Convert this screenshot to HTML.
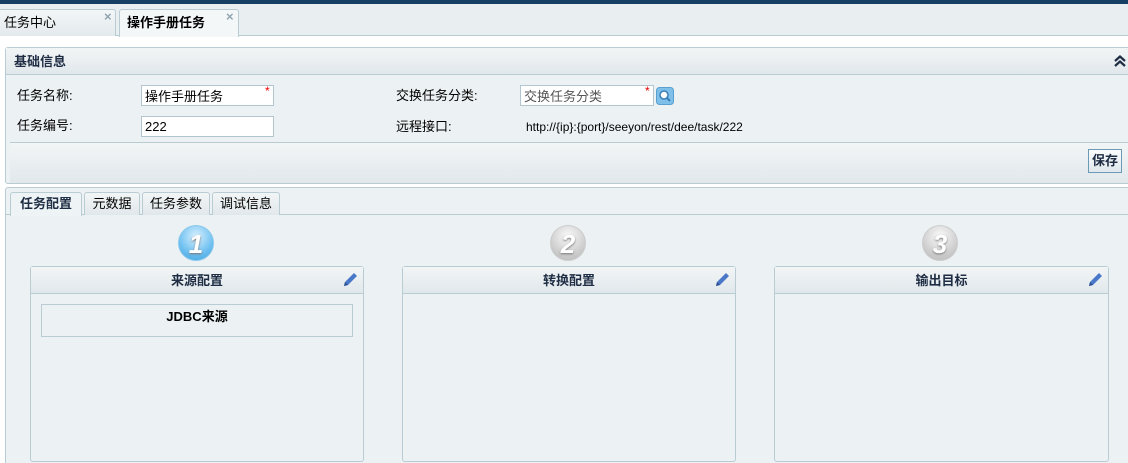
<!DOCTYPE html>
<html style="height:463px;overflow:hidden"><head><meta charset="utf-8"><style>
*{box-sizing:border-box;margin:0;padding:0}
body{width:1128px;height:463px;overflow:hidden;background:#fff;font-family:"Liberation Sans","Noto Sans CJK SC",sans-serif;font-size:12px;color:#000;position:relative}
.a{position:absolute}
.tabbar{left:0;top:4px;width:1128px;height:32px;background:#e9eef1;border-bottom:1px solid #b9cbd3}
.tab{top:9px;height:27px;border:1px solid #b9cbd3;border-bottom:none;border-radius:3px 3px 0 0;background:linear-gradient(#f3f6f7,#e3eaed);font-size:13px;line-height:26px;padding-left:5px}
.x{position:absolute;top:-6px;font-size:13px;color:#8fa4b0;font-weight:bold}
.panel{border:1px solid #b9cbd3;border-radius:3px;background:#ecf1f4}
.hdr{background:linear-gradient(#f2f5f6,#e1e8eb);border-bottom:1px solid #b9cbd3}
.lbl{font-size:13px;line-height:16px}
input{position:absolute;border:1px solid #b3c6cf;background:#fff;height:21px;font:13px "Liberation Sans","Noto Sans CJK SC",sans-serif;padding-left:3px}
.star{color:#e00;font-size:12px}
.t2{top:192px;height:23px;border:1px solid #b9cbd3;border-bottom:none;border-radius:3px 3px 0 0;background:linear-gradient(#f2f5f6,#e1e8eb);font-size:13px;line-height:22px;text-align:center}
.box{top:266px;height:196px;border:1px solid #b9cbd3;border-radius:3px;background:#ecf1f4}
.box .h{height:27px;line-height:27px;text-align:center;font-weight:bold;font-size:13px;color:#1e2d44;background:linear-gradient(#f2f5f6,#e1e8eb);border-bottom:1px solid #b9cbd3;position:relative}
.circ{width:36px;height:36px;border-radius:50%;top:225px;text-align:center;line-height:36px;font-size:26px;font-weight:bold;color:#fff;font-style:italic;text-shadow:0 1px 2px #777}
.pen{position:absolute;right:4px;top:4px}
</style></head><body>
<div class="a" style="left:0;top:0;width:1128px;height:4px;background:#173e64"></div>
<div class="a tabbar"></div>
<div class="a tab" style="left:-2px;width:118px">任务中心<span class="x" style="left:105px">×</span></div>
<div class="a tab" style="left:119px;width:120px;background:#f4f7f8;height:28px;font-weight:bold;padding-left:7px">操作手册任务<span class="x" style="left:106px">×</span></div>

<div class="a panel" style="left:5px;top:47px;width:1130px;height:137px"></div>
<div class="a hdr" style="left:6px;top:48px;width:1128px;height:27px;line-height:27px;padding-left:8px;font-weight:bold;font-size:13px;color:#1e2d44">基础信息</div>
<svg class="a" style="left:1114px;top:55px" width="12" height="12" viewBox="0 0 12 12"><path d="M1 6 L6 1.5 L11 6 M1 11 L6 6.5 L11 11" stroke="#1e2d44" stroke-width="2.2" fill="none"/></svg>
<div class="a lbl" style="left:17px;top:88px">任务名称:</div>
<input style="left:141px;top:85px;width:133px" value="操作手册任务"><span class="a star" style="left:265px;top:84px">*</span>
<div class="a lbl" style="left:17px;top:118px">任务编号:</div>
<input style="left:141px;top:116px;width:133px" value="222">
<div class="a lbl" style="left:396px;top:88px">交换任务分类:</div>
<input style="left:520px;top:85px;width:134px;color:#555" value="交换任务分类"><span class="a star" style="left:645px;top:84px">*</span>
<svg class="a" style="left:656px;top:87px" width="18" height="18" viewBox="0 0 18 18"><rect x="0.5" y="0.5" width="17" height="17" rx="3" fill="#7ec0ea" stroke="#5a9fd0"/><circle cx="8" cy="8" r="4" fill="#fff" stroke="#3b7fb8" stroke-width="1.5"/><path d="M11 11 L14 14" stroke="#3b7fb8" stroke-width="2"/></svg>
<div class="a lbl" style="left:396px;top:119px">远程接口:</div>
<div class="a" style="left:526px;top:120px;font-size:12px">http://{ip}:{port}/seeyon/rest/dee/task/222</div>
<div class="a hdr" style="left:10px;top:142px;width:1120px;height:41px;border-top:1px solid #b9cbd3;border-bottom:none"></div>
<div class="a" style="left:1088px;top:149px;width:34px;height:24px;border:1px solid #6b9ab5;background:linear-gradient(#fbfcfd,#dfe8ed);font-weight:bold;font-size:13px;text-align:center;line-height:22px;color:#1e2d44">保存</div>

<div class="a panel" style="left:5px;top:187px;width:1130px;height:290px"></div>
<div class="a" style="left:6px;top:214px;width:1128px;height:1px;background:#b9cbd3"></div>
<div class="a t2" style="left:10px;width:72px;background:#eef3f5;height:24px;font-weight:bold;color:#1e2d44">任务配置</div>
<div class="a t2" style="left:84px;width:56px">元数据</div>
<div class="a t2" style="left:142px;width:68px">任务参数</div>
<div class="a t2" style="left:212px;width:68px">调试信息</div>

<div class="a circ" style="left:178px;background:radial-gradient(circle at 50% 30%,#d8f0ff,#6ec0f0 60%,#3b9ee0);border:1px solid #8cc9ec">1</div>
<div class="a circ" style="left:550px;background:radial-gradient(circle at 50% 30%,#fafafa,#cfcfcf 60%,#b5b5b5);border:1px solid #ccc">2</div>
<div class="a circ" style="left:922px;background:radial-gradient(circle at 50% 30%,#fafafa,#cfcfcf 60%,#b5b5b5);border:1px solid #ccc">3</div>

<div class="a box" style="left:30px;width:334px"><div class="h">来源配置<svg class="pen" width="17" height="17" viewBox="0 0 17 17"><path d="M2 15 L3 11 L12 2 L15 5 L6 14 Z" fill="#4a78c8"/><path d="M2 15 L3 11 L6 14 Z" fill="#2d4f8f"/></svg></div>
<div style="position:absolute;left:10px;top:37px;width:312px;height:33px;border:1px solid #b9cbd3;text-align:center;font-weight:bold;font-size:13px;line-height:24px">JDBC来源</div></div>
<div class="a box" style="left:402px;width:334px"><div class="h">转换配置<svg class="pen" width="17" height="17" viewBox="0 0 17 17"><path d="M2 15 L3 11 L12 2 L15 5 L6 14 Z" fill="#4a78c8"/><path d="M2 15 L3 11 L6 14 Z" fill="#2d4f8f"/></svg></div></div>
<div class="a box" style="left:774px;width:335px"><div class="h">输出目标<svg class="pen" width="17" height="17" viewBox="0 0 17 17"><path d="M2 15 L3 11 L12 2 L15 5 L6 14 Z" fill="#4a78c8"/><path d="M2 15 L3 11 L6 14 Z" fill="#2d4f8f"/></svg></div></div>
</body></html>
